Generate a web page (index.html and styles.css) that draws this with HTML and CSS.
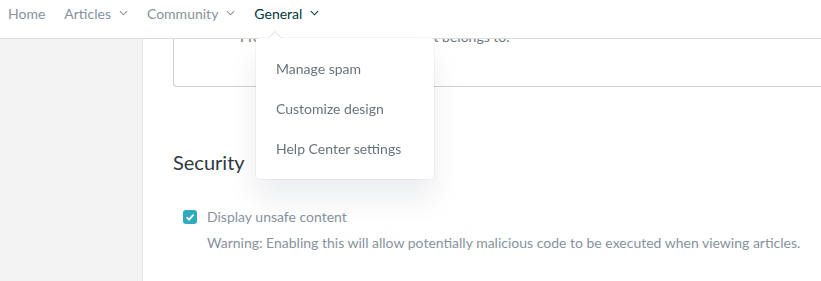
FILE: index.html
```html
<!DOCTYPE html>
<html lang="en">
<head>
    <meta charset="UTF-8">
    <meta name="viewport" content="width=device-width, initial-scale=1.0">
    <title>Help Center settings</title>
    <link rel="stylesheet" href="styles.css">
</head>
<body>
    <header class="topnav">
        <nav class="nav-links">
            <a class="nav-item">Home</a>
            <a class="nav-item">Articles
                <svg class="chev" viewBox="0 0 10 6"><path d="M1 1l4 4 4-4"/></svg>
            </a>
            <a class="nav-item">Community
                <svg class="chev" viewBox="0 0 10 6"><path d="M1 1l4 4 4-4"/></svg>
            </a>
            <a class="nav-item active">General
                <svg class="chev" viewBox="0 0 10 6"><path d="M1 1l4 4 4-4"/></svg>
            </a>
        </nav>
    </header>

    <!-- menu of the General tab, open -->
    <div class="dropdown">
        <span class="caret"></span>
        <a class="dropdown-item">Manage spam</a>
        <a class="dropdown-item">Customize design</a>
        <a class="dropdown-item">Help Center settings</a>
    </div>

    <div class="page">
        <aside class="sidebar"></aside>
        <main class="main">
            <div class="box">
                <p class="box-text">Provide the name of the brand it belongs to.</p>
            </div>

            <section class="section">
                <h2>Security</h2>
                <label class="check-row">
                    <span class="checkbox">
                        <svg viewBox="0 0 10 10"><path d="M2.6 5.2l1.7 1.7 3.2-3.6"/></svg>
                    </span>
                    <span class="check-label">Display unsafe content</span>
                </label>
                <p class="hint">Warning: Enabling this will allow potentially malicious code to be executed when viewing articles.</p>
            </section>
        </main>
    </div>
</body>
</html>
```

FILE: styles.css
```css
* {
    margin: 0;
    padding: 0;
    box-sizing: border-box;
}
body {
    font-family: Lato, "Open Sans", sans-serif;
    font-size: 14px;
    color: #555;
    background: #fff;
    overflow: hidden;
}

/* barre du haut */
.topnav {
    position: fixed;
    top: 0;
    left: 0;
    right: 0;
    height: 39px;
    background: #fff;
    border-bottom: 1px solid #dcdcdc;
    z-index: 5;
}
.nav-links {
    display: flex;
    gap: 19px;
    padding-left: 8px;
    height: 26px;
    align-items: center;
}
.nav-item {
    display: flex;
    align-items: center;
    gap: 8px;
    color: #87929d;
    font-size: 14px;
}
.nav-item.active {
    color: #03363d;
}
.chev {
    width: 9px;
    height: 6px;
    fill: none;
    stroke: currentColor;
    stroke-width: 1.2;
}

/* menu */
.dropdown {
    position: absolute;
    top: 38px;
    left: 256px;
    width: 178px;
    padding: 10px 0 11px;
    background: #fff;
    border-radius: 4px;
    box-shadow: 0 0 0 1px rgba(0, 0, 0, 0.04), 0 20px 30px rgba(4, 30, 60, 0.08);
    z-index: 10;
}
.caret {
    position: absolute;
    top: -5px;
    left: 14px;
    width: 10px;
    height: 10px;
    background: #fff;
    transform: rotate(45deg);
    border-top: 1px solid #e6e6e6;
    border-left: 1px solid #e6e6e6;
}
.dropdown-item {
    display: flex;
    align-items: center;
    height: 40px;
    padding-left: 20px;
    color: #68737d;
    font-size: 14px;
}

/* corps */
.page {
    display: flex;
    height: 100vh;
}
.sidebar {
    width: 143px;
    flex-shrink: 0;
    background: #f3f3f3;
    border-right: 1px solid #e8e8e8;
}
.main {
    flex: 1;
    padding-left: 30px;
}
.box {
    margin-top: -20px;
    height: 107px;
    border: 1px solid #cfcfcf;
    border-right: none;
    border-radius: 0 0 0 4px;
    padding: 47px 0 0 66px;
}
.box-text {
    color: #68737d;
    font-size: 14px;
}
.section {
    padding-top: 63px;
}
.section h2 {
    font-size: 20px;
    font-weight: 400;
    color: #2f3941;
    margin-bottom: 34px;
}
.check-row {
    display: flex;
    align-items: center;
    gap: 10px;
    padding-left: 10px;
}
.checkbox {
    width: 14px;
    height: 14px;
    border-radius: 3px;
    background: #30aabc;
    display: flex;
}
.checkbox svg {
    width: 14px;
    height: 14px;
    fill: none;
    stroke: #fff;
    stroke-width: 1.2;
}
.check-label {
    color: #87929d;
    font-size: 14px;
}
.hint {
    margin-top: 9px;
    padding-left: 34px;
    color: #87929d;
    font-size: 14px;
}
```
